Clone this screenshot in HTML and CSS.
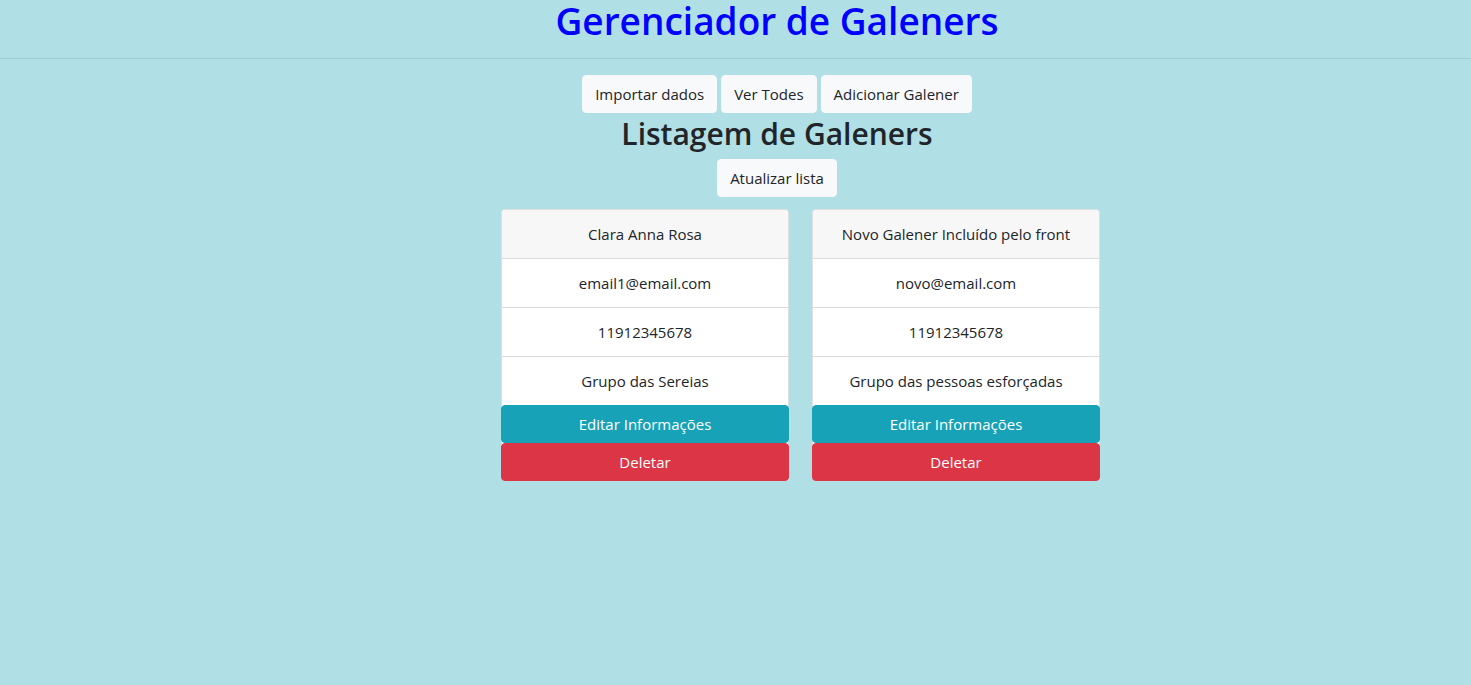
FILE: index.html
```html
<!DOCTYPE html>
<html lang="pt-BR">
<head>
<meta charset="utf-8">
<title>Gerenciador de Galeners</title>
<link rel="stylesheet" href="styles.css">
</head>
<body>
<header class="top">
  <h1 class="title">Gerenciador de Galeners</h1>
</header>
<main class="main">
  <nav class="menu">
    <button class="btn btn-light">Importar dados</button>
    <button class="btn btn-light">Ver Todes</button>
    <button class="btn btn-light">Adicionar Galener</button>
  </nav>
  <h2 class="subtitle">Listagem de Galeners</h2>
  <div class="refresh">
    <button class="btn btn-light">Atualizar lista</button>
  </div>
  <section class="cards">
    <div class="card">
      <div class="card-head">Clara Anna Rosa</div>
      <div class="item">email1@email.com</div>
      <div class="item">11912345678</div>
      <div class="item">Grupo das Sereias</div>
      <button class="btn btn-info">Editar Informações</button>
      <button class="btn btn-danger">Deletar</button>
    </div>
    <div class="card">
      <div class="card-head">Novo Galener Incluído pelo front</div>
      <div class="item">novo@email.com</div>
      <div class="item">11912345678</div>
      <div class="item">Grupo das pessoas esforçadas</div>
      <button class="btn btn-info">Editar Informações</button>
      <button class="btn btn-danger">Deletar</button>
    </div>
  </section>
</main>
</body>
</html>
```
FILE: styles.css
```css
* { box-sizing: border-box; }
html, body { margin: 0; padding: 0; }
body {
  background: #b0dfe5;
  font-family: "Open Sans", "Noto Sans", sans-serif;
  font-size: 15px;
  color: #212529;
  min-height: 685px;
}
.top {
  border-bottom: 1px solid #9fcfd5;
  height: 59px;
  padding-left: 83px;
  text-align: center;
}
.title {
  margin: 0;
  font-size: 37px;
  font-weight: 600;
  color: #0000ff;
  line-height: 42px;
  padding-top: 0;
}
.main {
  padding-left: 83px;
  padding-top: 16px;
}
.menu {
  display: flex;
  justify-content: center;
  gap: 4px;
}
.btn {
  font-family: inherit;
  font-size: 15px;
  line-height: 22px;
  padding: 7px 12px;
  border: 1px solid transparent;
  border-radius: 4px;
  cursor: pointer;
  color: #212529;
}
.btn-light { background: #f8f9fa; border-color: #f8f9fa; }
.subtitle {
  margin: 0;
  text-align: center;
  font-size: 30px;
  font-weight: 600;
  line-height: 42px;
  color: #212529;
}
.refresh {
  display: flex;
  justify-content: center;
  margin-top: 4px;
}
.cards {
  display: flex;
  justify-content: center;
  gap: 23px;
  padding-left: 47px;
  margin-top: 12px;
}
.card {
  width: 288px;
  display: flex;
  flex-direction: column;
  border: 1px solid #dfdfdf;
  border-radius: 4px;
  background: #fff;
  text-align: center;
}
.card-head {
  background: #f7f7f7;
  height: 49px;
  line-height: 48px;
  border-bottom: 1px solid #dcdcdc;
  border-radius: 3px 3px 0 0;
}
.item {
  height: 49px;
  line-height: 48px;
  border-bottom: 1px solid #dcdcdc;
}
.item:last-of-type { border-bottom: none; height: 48px; }
.card .btn {
  width: calc(100% + 2px);
  margin: 0 -1px;
  color: #fff;
  height: 38px;
  padding: 6px 12px;
}
.btn-info { background: #17a2b8; border-color: #17a2b8; }
.btn-danger { background: #dc3545; border-color: #dc3545; margin-bottom: -1px !important; }
```
